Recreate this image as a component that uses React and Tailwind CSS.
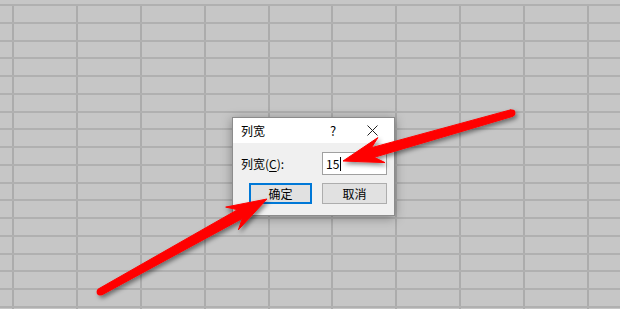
import React from 'react';

const ROWS = 18;
const COLS = 10;

function arrowPoints([tx, ty], [px, py]) {
  const dx = px - tx;
  const dy = py - ty;
  const len = Math.hypot(dx, dy);
  const ux = dx / len;
  const uy = dy / len;
  const nx = -uy;
  const ny = ux;
  const headLen = 40;
  const headHalf = 13;
  const neck = 31;
  const neckHalf = 5;
  const tailHalf = 3.4;
  const pts = [
    [px, py],
    [px - ux * headLen + nx * headHalf, py - uy * headLen + ny * headHalf],
    [px - ux * neck + nx * neckHalf, py - uy * neck + ny * neckHalf],
    [tx + nx * tailHalf, ty + ny * tailHalf],
    [tx - nx * tailHalf, ty - ny * tailHalf],
    [px - ux * neck - nx * neckHalf, py - uy * neck - ny * neckHalf],
    [px - ux * headLen - nx * headHalf, py - uy * headLen - ny * headHalf],
  ];
  return pts.map((p) => p.map((v) => v.toFixed(1)).join(',')).join(' ');
}

function Arrow({ tail, tip }) {
  return (
    <g filter="url(#arrowShadow)">
      <polygon points={arrowPoints(tail, tip)} fill="#ff0000" strokeLinejoin="round" stroke="#ff0000" strokeWidth="1" />
      <circle cx={tail[0]} cy={tail[1]} r="3.4" fill="#ff0000" />
    </g>
  );
}

function Sheet() {
  return (
    <div className="flex flex-col">
      <div className="h-[6px] border-b-2 border-[#b0b0b0]" />
      {Array.from({ length: ROWS }).map((_, r) => (
        <div key={r} className="flex h-[17.76px] border-b-2 border-[#b0b0b0]">
          <div className="w-[14px] shrink-0 border-r-2 border-[#acacac]" />
          {Array.from({ length: COLS }).map((_, c) => (
            <div key={c} className="w-[63.9px] shrink-0 border-r-2 border-[#acacac]" />
          ))}
        </div>
      ))}
    </div>
  );
}

function ColumnWidthDialog() {
  return (
    <div className="absolute left-[232px] top-[117px] w-[163px] h-[99px] border border-[#8c8c8c] bg-[#f0f0f0] shadow-[0_2px_10px_rgba(0,0,0,0.35)] flex flex-col text-[12px] text-black">
      {/* Title bar */}
      <div className="h-[25px] bg-white flex items-center pl-[8px]">
        <span className="flex-1">列宽</span>
        <span className="w-[10px] text-center mr-[29px] text-[13px]">?</span>
        <svg width="11" height="11" viewBox="0 0 11 11" className="mr-[16px]">
          <path d="M0.5 0.5 L10.5 10.5 M10.5 0.5 L0.5 10.5" stroke="#222" strokeWidth="1" />
        </svg>
      </div>
      {/* Body */}
      <div className="flex-1 flex flex-col pt-[9px] pl-[8px] pr-[7px]">
        <div className="flex items-center justify-between">
          <span>
            列宽(<span className="underline underline-offset-2">C</span>):
          </span>
          <div className="w-[65px] h-[23px] bg-white border border-[#a0a0a0] flex items-center pl-[3px]">
            <span>15</span>
            <span className="w-px h-[14px] bg-black ml-px" />
          </div>
        </div>
        <div className="flex items-center justify-between mt-[8px] pl-[8px]">
          <button className="w-[63px] h-[21px] bg-[#e1e1e1] border-2 border-[#0078d7] flex items-center justify-center leading-none">
            确定
          </button>
          <button className="w-[65px] h-[21px] bg-[#e1e1e1] border border-[#adadad] flex items-center justify-center leading-none">
            取消
          </button>
        </div>
      </div>
    </div>
  );
}

export default function App() {
  return (
    <div
      className="relative w-[620px] h-[309px] overflow-hidden bg-[#c6c6c6]"
      style={{ fontFamily: '"Noto Sans CJK SC", "Noto Sans", sans-serif' }}
    >
      <Sheet />
      <ColumnWidthDialog />
      <svg className="absolute inset-0" width="620" height="309" viewBox="0 0 620 309">
        <defs>
          <filter id="arrowShadow" x="-20%" y="-20%" width="140%" height="140%">
            <feDropShadow dx="2" dy="2.5" stdDeviation="2" floodColor="#000" floodOpacity="0.45" />
          </filter>
        </defs>
        <Arrow tail={[512, 113]} tip={[343, 161]} />
        <Arrow tail={[100, 292]} tip={[267, 199]} />
      </svg>
    </div>
  );
}
